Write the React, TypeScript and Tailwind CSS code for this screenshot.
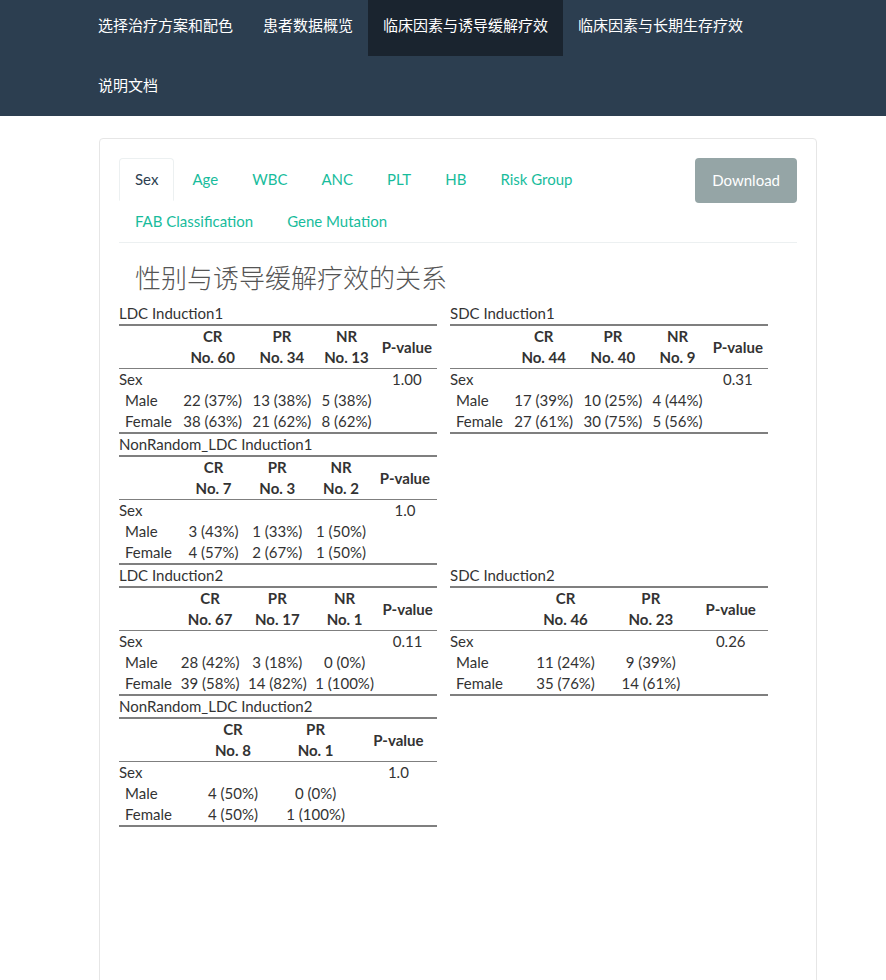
const navItems = ["选择治疗方案和配色", "患者数据概览", "临床因素与诱导缓解疗效", "临床因素与长期生存疗效", "说明文档"];
const tabs = ["Sex", "Age", "WBC", "ANC", "PLT", "HB", "Risk Group", "FAB Classification", "Gene Mutation"];

type Tbl = {
  title: string;
  cols: [string, string][];
  p: string;
  male: string[];
  female: string[];
};

const tables: (Tbl | null)[] = [
  {
    title: "LDC Induction1",
    cols: [["CR", "No. 60"], ["PR", "No. 34"], ["NR", "No. 13"]],
    p: "1.00",
    male: ["22 (37%)", "13 (38%)", "5 (38%)"],
    female: ["38 (63%)", "21 (62%)", "8 (62%)"],
  },
  {
    title: "SDC Induction1",
    cols: [["CR", "No. 44"], ["PR", "No. 40"], ["NR", "No. 9"]],
    p: "0.31",
    male: ["17 (39%)", "10 (25%)", "4 (44%)"],
    female: ["27 (61%)", "30 (75%)", "5 (56%)"],
  },
  {
    title: "NonRandom_LDC Induction1",
    cols: [["CR", "No. 7"], ["PR", "No. 3"], ["NR", "No. 2"]],
    p: "1.0",
    male: ["3 (43%)", "1 (33%)", "1 (50%)"],
    female: ["4 (57%)", "2 (67%)", "1 (50%)"],
  },
  null,
  {
    title: "LDC Induction2",
    cols: [["CR", "No. 67"], ["PR", "No. 17"], ["NR", "No. 1"]],
    p: "0.11",
    male: ["28 (42%)", "3 (18%)", "0 (0%)"],
    female: ["39 (58%)", "14 (82%)", "1 (100%)"],
  },
  {
    title: "SDC Induction2",
    cols: [["CR", "No. 46"], ["PR", "No. 23"]],
    p: "0.26",
    male: ["11 (24%)", "9 (39%)"],
    female: ["35 (76%)", "14 (61%)"],
  },
  {
    title: "NonRandom_LDC Induction2",
    cols: [["CR", "No. 8"], ["PR", "No. 1"]],
    p: "1.0",
    male: ["4 (50%)", "0 (0%)"],
    female: ["4 (50%)", "1 (100%)"],
  },
];

function StatTable({ t }: { t: Tbl }) {
  return (
    <div className="w-[318px] text-[15px] leading-[21px] text-[#333]">
      <div className="h-[21px]">{t.title}</div>
      <table className="w-full table-auto border-collapse border-t-2 border-b-2 border-[#7f7f7f]">
        <thead>
          <tr className="border-b border-[#7f7f7f]">
            <th className="p-0"></th>
            {t.cols.map(([a, b]) => (
              <th key={a} className="whitespace-nowrap px-[4px] py-0 text-center font-bold leading-[21px]">
                {a}
                <br />
                {b}
              </th>
            ))}
            <th className="whitespace-nowrap px-[4px] py-0 text-center align-middle font-bold">P-value</th>
          </tr>
        </thead>
        <tbody>
          <tr className="h-[21px]">
            <td className="p-0 pr-[4px] text-left">Sex</td>
            {t.cols.map(([a]) => (
              <td key={a} className="px-[4px] py-0"></td>
            ))}
            <td className="px-[4px] py-0 text-center">{t.p}</td>
          </tr>
          {[
            ["Male", t.male],
            ["Female", t.female],
          ].map(([label, vals]) => (
            <tr key={label as string} className="h-[21px]">
              <td className="whitespace-nowrap p-0 pl-[6px] pr-[4px] text-left">{label as string}</td>
              {(vals as string[]).map((v, i) => (
                <td key={i} className="whitespace-nowrap px-[4px] py-0 text-center">
                  {v}
                </td>
              ))}
              <td className="px-[4px] py-0"></td>
            </tr>
          ))}
        </tbody>
      </table>
    </div>
  );
}

export default function App() {
  return (
    <div className="min-h-[980px] bg-white font-['Lato','Noto_Sans_CJK_SC',sans-serif] text-[15px] text-[#2c3e50]">
      <nav className="bg-[#2c3e50]">
        <div className="mx-auto w-[750px] px-[15px]">
          <ul className="flex flex-wrap gap-y-[4px]">
            {navItems.map((n, i) => (
              <li key={n}>
                <a
                  className={`block h-[56px] px-[15px] pt-[15px] leading-[21px] text-white ${
                    i === 2 ? "bg-[#1a242f]" : ""
                  }`}
                >
                  {n}
                </a>
              </li>
            ))}
          </ul>
        </div>
      </nav>

      <div className="ml-[99px] mt-[22px] min-h-[860px] w-[718px] rounded-[4px] border border-[#e6e6e6] bg-white p-[19px]">
        <div className="flex items-start border-b border-[#ecf0f1]">
          <ul className="flex flex-1 flex-wrap">
            {tabs.map((t, i) => (
              <li key={t} className="-mb-px mr-[2px]">
                <a
                  className={`block rounded-t-[4px] border px-[15px] py-[10px] leading-[21px] ${
                    i === 0
                      ? "border-[#ecf0f1] border-b-white bg-white text-[#2c3e50]"
                      : "border-transparent text-[#18bc9c]"
                  }`}
                >
                  {t}
                </a>
              </li>
            ))}
          </ul>
          <button className="h-[45px] rounded-[4px] bg-[#95a5a6] px-[17px] leading-[21px] text-white">
            Download
          </button>
        </div>

        <h3 className="mb-[10px] mt-[21px] pl-[16px] text-[26px] font-light leading-[29px] text-[#555]">
          性别与诱导缓解疗效的关系
        </h3>

        <div className="grid grid-cols-[318px_318px] gap-x-[13px]">
          {tables.map((t, i) => (t ? <StatTable key={i} t={t} /> : <div key={i} />))}
        </div>
      </div>
    </div>
  );
}
